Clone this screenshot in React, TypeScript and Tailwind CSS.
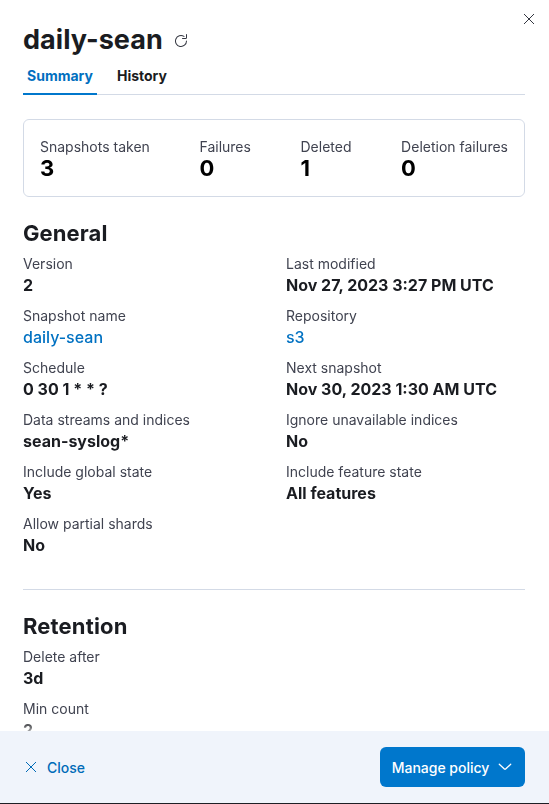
import React from 'react';

const general: [string, string, boolean?][] = [
  ['Version', '2'],
  ['Last modified', 'Nov 27, 2023 3:27 PM UTC'],
  ['Snapshot name', 'daily-sean', true],
  ['Repository', 's3', true],
  ['Schedule', '0 30 1 * * ?'],
  ['Next snapshot', 'Nov 30, 2023 1:30 AM UTC'],
  ['Data streams and indices', 'sean-syslog*'],
  ['Ignore unavailable indices', 'No'],
  ['Include global state', 'Yes'],
  ['Include feature state', 'All features'],
  ['Allow partial shards', 'No'],
];

const stats = [
  ['Snapshots taken', '3'],
  ['Failures', '0'],
  ['Deleted', '1'],
  ['Deletion failures', '0'],
];

function Item({ label, value, link }: { label: string; value: string; link?: boolean }) {
  return (
    <div className="h-[52px]">
      <dt className="text-[14px] leading-[20px] text-[#404350]">{label}</dt>
      <dd className={link ? 'text-[16px] leading-[23px] font-medium text-[#0071c2]' : 'text-[16px] leading-[23px] font-bold text-[#1a1c21]'}>{value}</dd>
    </div>
  );
}

export default function App() {
  return (
    <div className="flex h-[804px] w-[549px] flex-col overflow-hidden border-b border-[#1d1e24] bg-white font-['Inter',sans-serif] text-[#1a1c21]">
      <header className="relative h-[95px] shrink-0 pt-[20px] pr-[24px] pl-[23px]">
        <button className="absolute top-[14px] right-[15px]" aria-label="Close flyout">
          <svg width="10" height="10" viewBox="0 0 10 10" fill="none" stroke="#343741"><path d="M0 0 10 10M10 0 0 10" /></svg>
        </button>
        <div className="flex h-[40px] items-center">
          <h1 className="text-[27px] leading-[40px] font-bold tracking-[0.04px]">daily-sean</h1>
          <svg className="mt-[2px] ml-[10px]" width="16" height="16" viewBox="0 0 16 16" fill="#343741"><path d="M11.228 2.942a.5.5 0 1 1-.538.842A5 5 0 1 0 13 8a.5.5 0 1 1 1 0 6 6 0 1 1-2.772-5.058ZM14 1.5v3A1.5 1.5 0 0 1 12.5 6h-3a.5.5 0 0 1 0-1h3a.5.5 0 0 0 .5-.5v-3a.5.5 0 1 1 1 0Z" /></svg>
        </div>
        <nav className="flex h-[35px] gap-[16px] border-b border-[#d3dae6] text-[14px] leading-[32px] font-bold">
          <span className="h-[35px] border-b-2 border-[#0077cc] px-[4px] text-[#006fbf]">Summary</span>
          <span className="px-[4px]">History</span>
        </nav>
      </header>
      <main className="h-[636px] shrink-0 overflow-hidden mask-[linear-gradient(to_bottom,black_calc(100%_-_10px),rgba(0,0,0,0.4))] pt-[24px] pr-[24px] pl-[23px]">
        <dl className="flex h-[78px] justify-between rounded-[6px] border border-[#d3dae6] px-[16px] pt-[16px]">
          {stats.map(([label, value]) => (
            <div key={label}>
              <dt className="text-[14px] leading-[21px] text-[#404350]">{label}</dt>
              <dd className="text-[22px] leading-[22px] font-bold text-black">{value}</dd>
            </div>
          ))}
        </dl>
        <h2 className="mt-[20px] h-[37px] text-[22px] leading-[32px] font-bold tracking-[0.1px]">General</h2>
        <dl className="grid grid-cols-2 gap-x-[24px]">
          {general.map(([label, value, link]) => <Item key={label} label={label} value={value} link={link} />)}
        </dl>
        <hr className="mt-[23px] border-[#d3dae6]" />
        <h2 className="mt-[20px] h-[37px] text-[22px] leading-[32px] font-bold tracking-[0.15px]">Retention</h2>
        <dl>
          <Item label="Delete after" value="3d" />
          <Item label="Min count" value="2" />
        </dl>
      </main>
      <footer className="flex flex-1 items-center justify-between bg-[#f0f4fb] pr-[24px] pl-[23px]">
        <button className="flex items-center gap-[8px] text-[14px] font-medium text-[#006bb8]">
          <svg width="16" height="16" viewBox="0 0 16 16" fill="none" stroke="currentColor"><path d="M3 3 13 13M13 3 3 13" /></svg>
          Close
        </button>
        <button className="flex h-[40px] w-[145px] items-center justify-center gap-[8px] rounded-[6px] bg-[#0077cc] text-[14px] font-medium tracking-[-0.03px] text-white">
          Manage policy
          <svg width="16" height="16" viewBox="0 0 16 16" fill="none" stroke="currentColor" strokeWidth="1.3" strokeLinecap="round" strokeLinejoin="round"><path d="M2.3 5.3 7.4 10Q8 10.5 8.6 10L13.7 5.3" /></svg>
        </button>
      </footer>
    </div>
  );
}
